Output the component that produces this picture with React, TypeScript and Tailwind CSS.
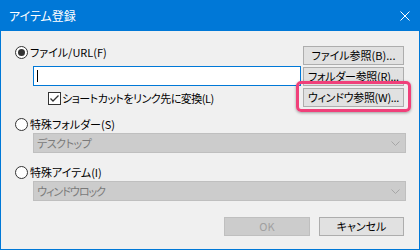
import React from "react";

const font = "font-['Noto_Sans_CJK_JP',sans-serif] [font-feature-settings:'palt'_1]";

function Radio({ checked }: { checked?: boolean }) {
  return (
    <span className="w-[13px] h-[13px] rounded-full border border-[#333333] bg-white flex items-center justify-center shrink-0">
      {checked && <span className="w-[7px] h-[7px] rounded-full bg-[#333333]" />}
    </span>
  );
}

function Checkbox() {
  return (
    <span className="w-[13px] h-[13px] border border-[#333333] bg-white flex items-center justify-center shrink-0">
      <svg width="11" height="11" viewBox="0 0 11 11">
        <path d="M1.5 5.5 L4 8 L9.5 2.5" fill="none" stroke="#333333" strokeWidth="1.3" />
      </svg>
    </span>
  );
}

function Btn({ children, disabled, className = "" }: { children: React.ReactNode; disabled?: boolean; className?: string }) {
  return (
    <div
      className={
        "h-[19px] flex items-center justify-center text-[11px] leading-none whitespace-nowrap border " +
        (disabled ? "bg-[#cccccc] border-[#bfbfbf] text-[#a0a0a0] " : "bg-[#e1e1e1] border-[#adadad] text-black ") +
        className
      }
    >
      {children}
    </div>
  );
}

function Combo({ text, track }: { text: string; track: string }) {
  return (
    <div className="ml-[18px] w-[373px] h-[20px] bg-[#cccccc] border border-[#bfbfbf] flex items-center justify-between pl-[3px] pr-[5px]">
      <span className={"text-[11px] leading-none text-[#7a7a7a] whitespace-nowrap " + track}>{text}</span>
      <svg width="9" height="5" viewBox="0 0 9 5">
        <path d="M0.5 0.5 L4.5 4.5 L8.5 0.5" fill="none" stroke="#a6a6a6" strokeWidth="1" />
      </svg>
    </div>
  );
}

export default function App() {
  return (
    <div className={"relative w-[420px] h-[250px] bg-[#0078d7] px-px pb-px flex flex-col " + font}>
      <div className="h-[31px] shrink-0 flex items-center justify-between pl-[8px] pr-[9px] text-white">
        <span className="text-[12px] leading-none whitespace-nowrap">アイテム登録</span>
        <svg width="10" height="10" viewBox="0 0 10 10">
          <path d="M0.5 0.5 L9.5 9.5 M9.5 0.5 L0.5 9.5" stroke="white" strokeWidth="1" />
        </svg>
      </div>
      <div className="flex-1 bg-[#f0f0f0] flex flex-col pl-[14px] pt-[13px] text-black">
        <div className="flex">
          <div className="flex flex-col w-[288px]">
            <div className="h-[16px] flex items-center gap-[2px]">
              <Radio checked />
              <span className="text-[11px] leading-none whitespace-nowrap">ファイル/URL(F)</span>
            </div>
            <div className="ml-[18px] mt-[6px] w-[268px] h-[20px] bg-white border border-[#0078d7] flex items-center pl-[3px]">
              <span className="w-px h-[12px] bg-black" />
            </div>
            <div className="ml-[33px] mt-[4px] h-[16px] flex items-center gap-[1px]">
              <Checkbox />
              <span className="text-[11px] leading-none whitespace-nowrap tracking-[-0.5px]">ショートカットをリンク先に変換(L)</span>
            </div>
          </div>
          <div className="flex flex-col gap-[2px] mt-[2px]">
            <Btn className="w-[101px]">ファイル参照(B)...</Btn>
            <Btn className="w-[101px] tracking-[-0.3px]">フォルダー参照(R)...</Btn>
            <Btn className="w-[101px] tracking-[-0.3px]">ウィンドウ参照(W)...</Btn>
          </div>
        </div>
        <div className="mt-[9px] h-[16px] flex items-center gap-[2px]">
          <Radio />
          <span className="text-[11px] leading-none whitespace-nowrap">特殊フォルダー(S)</span>
        </div>
        <div className="mt-px">
          <Combo text="デスクトップ" track="tracking-[-0.5px]" />
        </div>
        <div className="mt-[11px] h-[16px] flex items-center gap-[2px]">
          <Radio />
          <span className="text-[11px] leading-none whitespace-nowrap">特殊アイテム(I)</span>
        </div>
        <div className="mt-px">
          <Combo text="ウィンドウロック" track="tracking-[-1px]" />
        </div>
        <div className="mt-[16px] flex justify-end gap-[9px] pr-[15px]">
          <Btn disabled className="w-[86px]">OK</Btn>
          <Btn className="w-[85px]">キャンセル</Btn>
        </div>
      </div>
      <div className="absolute left-[296px] top-[81px] w-[115px] h-[31px] rounded-[5px] border-[3px] border-[#f0407a] shadow-[0_1px_3px_rgba(0,0,0,0.35)]" />
    </div>
  );
}
